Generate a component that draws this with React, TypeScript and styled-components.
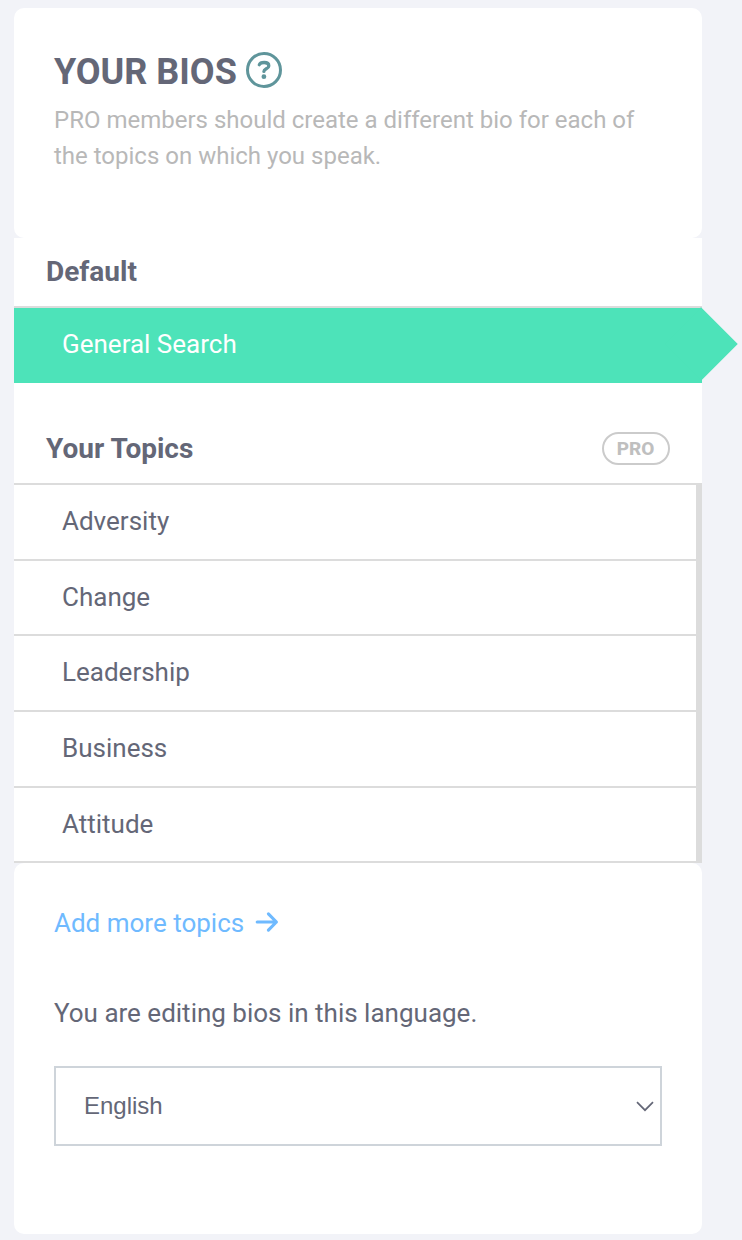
import React from "react";
import styled, { createGlobalStyle } from "styled-components";

const GlobalStyle = createGlobalStyle`
  * { box-sizing: border-box; }
  body {
    margin: 0;
    background: #f2f3f8;
    color: #646777;
    font-family: Roboto, "Liberation Sans", sans-serif;
  }
`;

const Sidebar = styled.main`
  width: 742px;
  height: 1240px;
  padding: 8px 40px 6px 14px;
  display: flex;
  flex-direction: column;
`;

const IntroCard = styled.header`
  height: 230px;
  padding: 41px 40px 0;
  border-radius: 10px;
  background: #fff;
`;

const TitleRow = styled.div`
  display: flex;
  align-items: center;
  gap: 8px;
  height: 46px;
`;

const Title = styled.h1`
  margin: 0;
  font-size: 36px;
  line-height: 46px;
  font-weight: 700;
`;

const HelpIcon = styled.svg`
  width: 38px;
  height: 38px;
  margin-top: -4px;
`;

const Subtitle = styled.p`
  margin: 7px 0 0;
  font-size: 24px;
  line-height: 36px;
  color: #b8b8b8;
`;

const Group = styled.section`
  background: #fff;
`;

const GroupHeader = styled.div<{ $height: number; $pad: number }>`
  display: flex;
  align-items: flex-start;
  justify-content: space-between;
  height: ${(p) => p.$height}px;
  padding: ${(p) => p.$pad}px 32px 0;
  border-bottom: 2px solid #dcdcdc;
`;

const GroupTitle = styled.h2`
  margin: 0;
  font-size: 28px;
  line-height: 34px;
  font-weight: 700;
`;

const ProBadge = styled.span`
  display: flex;
  align-items: center;
  justify-content: center;
  width: 68px;
  height: 33px;
  padding-right: 1px;
  border: 2px solid #cbcbcb;
  border-radius: 17px;
  color: #bfbfbf;
  font-size: 19px;
  font-weight: 800;
`;

const ActiveItem = styled.div`
  position: relative;
  height: 75px;
  padding: 20px 48px 0;
  background: #4de3b9;
  color: #fff;
  font-size: 26px;
  line-height: 32px;

  &::after {
    content: "";
    position: absolute;
    top: 9.5px;
    right: -25px;
    width: 52px;
    height: 52px;
    background: #4de3b9;
    transform: rotate(45deg);
  }
`;

const TopicList = styled.ul`
  list-style: none;
  margin: 0;
  padding: 0;
  height: 378px;
  border-right: 6px solid #dcdcdc;
`;

const Topic = styled.li`
  height: 75.65px;
  padding: 20px 48px 0;
  border-bottom: 2px solid #dcdcdc;
  font-size: 26px;
  line-height: 32px;
`;

const FooterCard = styled.footer`
  flex: 1;
  padding: 44px 40px 0;
  border-radius: 10px;
  background: #fff;
`;

const AddLink = styled.a`
  display: flex;
  align-items: center;
  gap: 11px;
  color: #6fbaff;
  font-size: 26px;
  line-height: 32px;
`;

const ArrowIcon = styled.svg`
  width: 24px;
  height: 22px;
  margin-top: -2px;
`;

const LanguageLabel = styled.p`
  margin: 58px 0 37px;
  font-size: 26px;
  line-height: 32px;
`;

const LanguageSelect = styled.button`
  display: flex;
  align-items: center;
  justify-content: space-between;
  width: 608px;
  height: 80px;
  padding: 0 6px 0 28px;
  border: 2px solid #ced4da;
  background: #fff;
  color: #646777;
  font-family: "Liberation Sans", Arial, sans-serif;
  font-size: 24px;
`;

const Chevron = styled.svg`
  width: 18px;
  height: 11px;
`;

const topics = ["Adversity", "Change", "Leadership", "Business", "Attitude"];

export default function App() {
  return (
    <>
      <GlobalStyle />
      <Sidebar>
        <IntroCard>
          <TitleRow>
            <Title>YOUR BIOS</Title>
            <HelpIcon viewBox="0 0 38 38" fill="none" stroke="#5f959b">
              <circle cx="19" cy="19" r="16.5" strokeWidth="3" />
              <path
                d="M14.3 13.8C15 11.9 16.8 11.5 19.2 11.5C22 11.5 23.8 12.6 23.8 14.9C23.8 17.9 18.9 17.7 18.9 20.4"
                strokeWidth="3.3"
                strokeLinecap="round"
                strokeLinejoin="round"
              />
              <circle cx="18.9" cy="25.7" r="2.4" fill="#5f959b" stroke="none" />
            </HelpIcon>
          </TitleRow>
          <Subtitle>
            PRO members should create a different bio for each of the topics on which you speak.
          </Subtitle>
        </IntroCard>
        <Group>
          <GroupHeader $height={70} $pad={17}>
            <GroupTitle>Default</GroupTitle>
          </GroupHeader>
          <ActiveItem>General Search</ActiveItem>
        </Group>
        <Group>
          <GroupHeader $height={102} $pad={49}>
            <GroupTitle>Your Topics</GroupTitle>
            <ProBadge>PRO</ProBadge>
          </GroupHeader>
          <TopicList>
            {topics.map((topic) => (
              <Topic key={topic}>{topic}</Topic>
            ))}
          </TopicList>
        </Group>
        <FooterCard>
          <AddLink>
            Add more topics
            <ArrowIcon
              viewBox="0 0 24 22"
              fill="none"
              stroke="currentColor"
              strokeWidth="3.1"
              strokeLinecap="round"
              strokeLinejoin="round"
            >
              <path d="M2.2 11H21.4M13.4 2.8L21.4 11L13.4 19.2" />
            </ArrowIcon>
          </AddLink>
          <LanguageLabel>You are editing bios in this language.</LanguageLabel>
          <LanguageSelect type="button">
            English
            <Chevron viewBox="0 0 18 11" fill="none" stroke="currentColor" strokeWidth="1.7">
              <path d="M1 1.2L9 9.2L17 1.2" />
            </Chevron>
          </LanguageSelect>
        </FooterCard>
      </Sidebar>
    </>
  );
}
